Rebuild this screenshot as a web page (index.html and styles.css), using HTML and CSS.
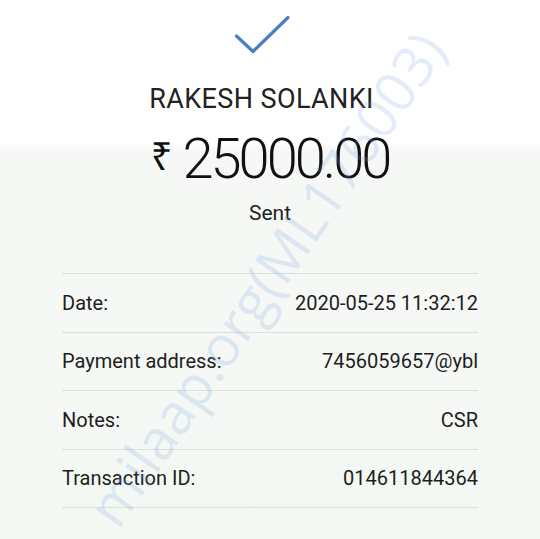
FILE: index.html
```html
<!DOCTYPE html>
<html>
<head>
<meta charset="utf-8">
<link rel="stylesheet" href="styles.css">
</head>
<body>
<div class="page">
  <header class="hero">
    <svg class="check" width="62" height="46" viewBox="230 12 62 46">
      <polyline points="235.5,36 252,51.5 287,17.5" fill="none" stroke="#4a7fc1" stroke-width="3.2" stroke-linecap="round" stroke-linejoin="round"/>
    </svg>
    <div class="name">RAKESH SOLANKI</div>
  </header>
  <div class="amount"><span class="rupee">₹</span><span class="value">25000.00</span></div>
  <div class="status">Sent</div>
  <ul class="details">
    <li class="row"><span>Date:</span><span>2020-05-25 11:32:12</span></li>
    <li class="row"><span>Payment address:</span><span>7456059657@ybl</span></li>
    <li class="row"><span>Notes:</span><span>CSR</span></li>
    <li class="row"><span>Transaction ID:</span><span>014611844364</span></li>
  </ul>
  <div class="watermark">milaap.org(ML176003)</div>
</div>
</body>
</html>
```
FILE: styles.css
```css
html, body {
  margin: 0;
  padding: 0;
}
body {
  width: 540px;
  height: 539px;
  overflow: hidden;
  font-family: Roboto, "Noto Sans", sans-serif;
  color: #1c1c1c;
  background: linear-gradient(#ffffff 0, #ffffff 142px, #f6f8f6 150px, #f4f8f3 539px);
}
.page {
  position: relative;
  height: 539px;
  overflow: hidden;
}
.hero {
  display: flex;
  flex-direction: column;
  align-items: center;
  padding-right: 17px;
}
.check {
  display: block;
  margin-top: 12px;
}
.name {
  margin-top: 25px;
  font-size: 27px;
  line-height: 32px;
  letter-spacing: 0.4px;
  color: #222;
}
.amount {
  display: flex;
  justify-content: center;
  align-items: center;
  margin-top: 15px;
  height: 58px;
}
.rupee {
  font-family: "Noto Sans", sans-serif;
  font-size: 38px;
  line-height: 38px;
  font-weight: 400;
  margin-right: 10px;
  margin-bottom: 8px;
  color: #111;
}
.value {
  font-size: 56px;
  font-weight: 300;
  letter-spacing: -3px;
  line-height: 58px;
  color: #111;
}
.status {
  text-align: center;
  font-size: 21px;
  line-height: 26px;
  margin-top: 12px;
  color: #222;
}
.details {
  list-style: none;
  margin: 47px 62px 0 62px;
  padding: 0;
  border-top: 1px solid #dcdfdc;
}
.row {
  display: flex;
  justify-content: space-between;
  align-items: center;
  height: 57.5px;
  border-bottom: 1px solid #dcdfdc;
  font-size: 20px;
  color: #1e1e1e;
}
.watermark {
  position: absolute;
  left: 265px;
  top: 278px;
  transform: translate(-50%, -50%) rotate(-55.5deg);
  font-family: "Open Sans", sans-serif;
  font-size: 56px;
  white-space: nowrap;
  color: rgba(120, 160, 225, 0.2);
  pointer-events: none;
}
```
